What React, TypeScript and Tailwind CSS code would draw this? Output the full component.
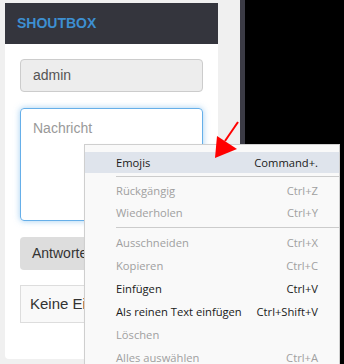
import React from 'react';

type Item =
  | { label: string; shortcut?: string; disabled?: boolean; active?: boolean; h: string }
  | 'sep';

const MENU: Item[] = [
  { label: 'Emojis', shortcut: 'Command+.', active: true, h: 'h-[21px]' },
  'sep',
  { label: 'Rückgängig', shortcut: 'Ctrl+Z', disabled: true, h: 'h-[22px]' },
  { label: 'Wiederholen', shortcut: 'Ctrl+Y', disabled: true, h: 'h-[22px]' },
  'sep',
  { label: 'Ausschneiden', shortcut: 'Ctrl+X', disabled: true, h: 'h-[23px]' },
  { label: 'Kopieren', shortcut: 'Ctrl+C', disabled: true, h: 'h-[23px]' },
  { label: 'Einfügen', shortcut: 'Ctrl+V', h: 'h-[23px]' },
  { label: 'Als reinen Text einfügen', shortcut: 'Ctrl+Shift+V', h: 'h-[23px]' },
  { label: 'Löschen', disabled: true, h: 'h-[23px]' },
  { label: 'Alles auswählen', shortcut: 'Ctrl+A', disabled: true, h: 'h-[23px]' },
];

function ContextMenu() {
  return (
    <div
      className="absolute left-[84px] top-[144px] w-[256px] border border-[#cfcfcf] bg-[#f9f9f9] pt-[7px] pb-2 shadow-[2px_2px_3px_rgba(0,0,0,0.18)] text-[11.2px] leading-none"
      style={{ fontFamily: '"Open Sans", "Noto Sans", sans-serif' }}
    >
      {MENU.map((item, i) =>
        item === 'sep' ? (
          <div key={i} className="flex h-[7px] items-center pl-[31px]">
            <div className="h-px w-full bg-[#cccccc]" />
          </div>
        ) : (
          <div
            key={i}
            className={`flex ${item.h} items-center justify-between pl-[31px] pr-[21px] ${
              item.active ? 'bg-[#dfe4ec]' : ''
            } ${item.disabled ? 'text-[#a0a0a0]' : 'text-[#1a1a1a]'}`}
          >
            <span>{item.label}</span>
            {item.shortcut && <span>{item.shortcut}</span>}
          </div>
        )
      )}
    </div>
  );
}

function Arrow() {
  return (
    <svg className="absolute left-0 top-0" width="344" height="364" viewBox="0 0 344 364">
      <line x1="238" y1="122" x2="225" y2="141" stroke="#ff0000" strokeWidth="2" />
      <polygon points="217,136 237,149 215,158" fill="#ff0000" />
    </svg>
  );
}

export default function App() {
  return (
    <div
      className="relative flex h-[364px] w-[344px] overflow-hidden bg-[#f0f0f0]"
      style={{ fontFamily: '"Liberation Sans", Arial, sans-serif' }}
    >
      <div className="w-[240px] shrink-0 pl-[5px] pt-[3px]">
        <div className="flex h-[356px] w-[213px] flex-col overflow-hidden rounded-b-[4px] bg-white">
          <div className="flex h-[41px] items-center bg-[#34353d] px-3">
            <span className="text-[14px] font-bold text-[#3d8fd1]">SHOUTBOX</span>
          </div>
          <div className="flex flex-col px-[15px] pt-[15px]">
            <div className="flex h-[33px] items-center rounded-[4px] border border-[#cccccc] bg-[#ededed] px-3 text-[14px] text-[#555]">
              admin
            </div>
            <div className="mt-4 h-[113px] rounded-[4px] border border-[#66afe9] px-3 pt-[9px] text-[14px] text-[#999] shadow-[0_0_6px_rgba(102,175,233,0.6)]">
              Nachricht
            </div>
            <div className="mt-4 flex h-[33px] items-center rounded-[4px] bg-[#dddddd] px-3 text-[14px] text-[#333]">
              Antworten
            </div>
            <div className="mt-[15px] flex h-[38px] items-center border border-[#dddddd] bg-[#f9f9f9] px-[9px] text-[15px] text-[#333]">
              Keine Einträge
            </div>
          </div>
        </div>
      </div>
      <div className="w-[5px] shrink-0 bg-[#3b3b45]" />
      <div className="flex-1 bg-black" />
      <ContextMenu />
      <Arrow />
    </div>
  );
}
